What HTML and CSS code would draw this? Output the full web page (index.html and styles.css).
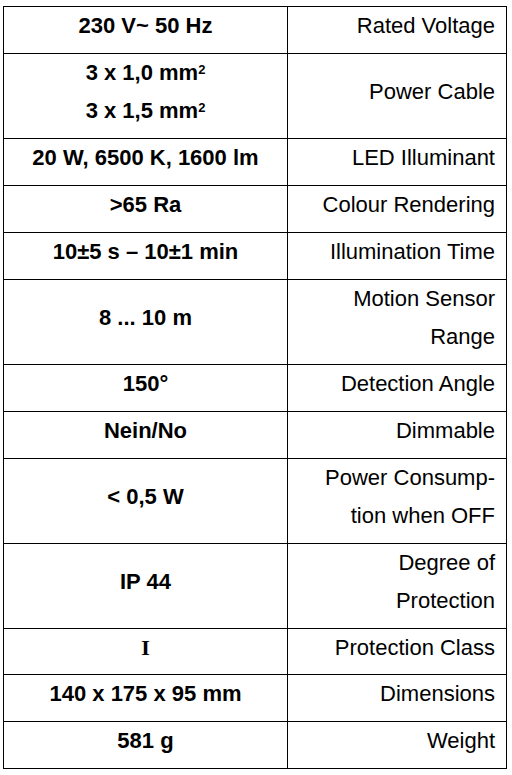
FILE: index.html
```html
<!DOCTYPE html>
<html>
<head>
<meta charset="utf-8">
<link rel="stylesheet" href="styles.css">
</head>
<body>
<table class="spec">
  <colgroup><col class="c-val"><col class="c-key"></colgroup>
  <tr><td class="val">230 V~ 50 Hz</td><td class="key">Rated Voltage</td></tr>
  <tr><td class="val">3 x 1,0 mm<sup>2</sup><br>3 x 1,5 mm<sup>2</sup></td><td class="key">Power Cable</td></tr>
  <tr><td class="val">20 W, 6500 K, 1600 lm</td><td class="key">LED Illuminant</td></tr>
  <tr><td class="val">&gt;65 Ra</td><td class="key">Colour Rendering</td></tr>
  <tr><td class="val">10±5 s – 10±1 min</td><td class="key">Illumination Time</td></tr>
  <tr><td class="val">8 ... 10 m</td><td class="key">Motion Sensor<br>Range</td></tr>
  <tr><td class="val">150°</td><td class="key">Detection Angle</td></tr>
  <tr><td class="val">Nein/No</td><td class="key">Dimmable</td></tr>
  <tr><td class="val">&lt; 0,5 W</td><td class="key">Power Consump-<br>tion when OFF</td></tr>
  <tr><td class="val">IP 44</td><td class="key">Degree of<br>Protection</td></tr>
  <tr class="tight"><td class="val serif">I</td><td class="key">Protection Class</td></tr>
  <tr><td class="val">140 x 175 x 95 mm</td><td class="key">Dimensions</td></tr>
  <tr><td class="val">581 g</td><td class="key">Weight</td></tr>
</table>
</body>
</html>
```
FILE: styles.css
```css
html, body {
  margin: 0;
  padding: 0;
  background: #fff;
}
body {
  padding: 6px 0 0 3px;
  font-family: "Liberation Sans", Arial, sans-serif;
  font-size: 22px;
  color: #000;
}
.spec {
  border-collapse: collapse;
  table-layout: fixed;
  width: 503px;
}
.c-val { width: 284px; }
.c-key { width: 219px; }
.spec td {
  border: 1px solid #000;
  line-height: 38px;
  padding: 0 11px 8px 11px;
  vertical-align: middle;
}
.spec .tight td {
  padding-bottom: 7px;
}
.val {
  font-weight: bold;
  text-align: center;
}
.key {
  text-align: right;
}
.serif {
  font-family: "Liberation Serif", "Times New Roman", serif;
}
sup {
  font-size: 13px;
  line-height: 0;
  vertical-align: 6px;
}
```
